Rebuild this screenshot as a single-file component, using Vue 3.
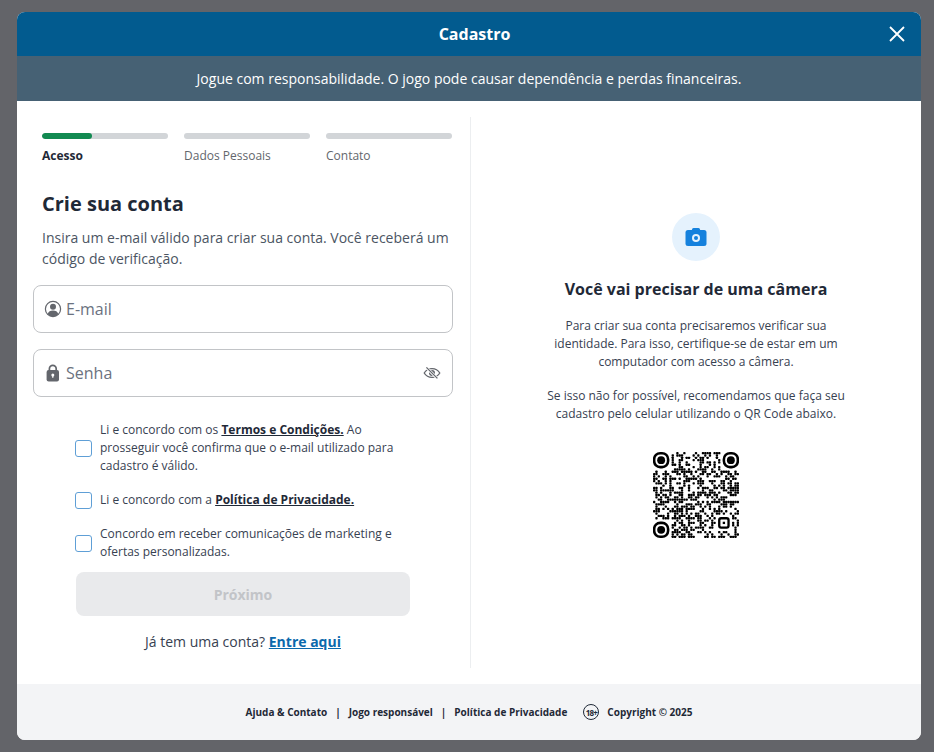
<template>
  <div class="overlay">
    <div class="modal">
      <header class="modal-header">
        <h1>Cadastro</h1>
        <button class="close-btn" aria-label="Fechar">
          <svg width="18" height="18" viewBox="0 0 18 18"><path d="M2 2l14 14M16 2L2 16" stroke="#fff" stroke-width="1.8" fill="none" /></svg>
        </button>
      </header>
      <div class="banner">Jogue com responsabilidade. O jogo pode causar dependência e perdas financeiras.</div>

      <main class="body">
        <section class="left">
          <div class="steps">
            <div v-for="(step, i) in steps" :key="step" class="step" :class="{ active: i === 0 }">
              <div class="bar"><div v-if="i === 0" class="bar-fill"></div></div>
              <span>{{ step }}</span>
            </div>
          </div>

          <h2>Crie sua conta</h2>
          <p class="intro">Insira um e-mail válido para criar sua conta. Você receberá um código de verificação.</p>

          <div class="fields">
            <label class="field">
              <svg class="field-icon" width="18" height="18" viewBox="0 0 18 18">
                <circle cx="9" cy="9" r="7.6" fill="none" stroke="#63666c" stroke-width="1.2" />
                <circle cx="9" cy="6.8" r="3" fill="#63666c" />
                <path d="M3.6 14.2c.8-2.6 2.8-3.7 5.4-3.7s4.6 1.1 5.4 3.7A7.4 7.4 0 0 1 9 16.5a7.4 7.4 0 0 1-5.4-2.3z" fill="#63666c" />
              </svg>
              <input type="text" placeholder="E-mail" />
            </label>
            <label class="field">
              <svg class="field-icon" width="18" height="18" viewBox="0 0 18 18">
                <path d="M5.4 7V4.8a3.4 3.4 0 0 1 6.8 0V7" fill="none" stroke="#63666c" stroke-width="1.7" />
                <rect x="2.6" y="6" width="12.4" height="11.4" rx="2" fill="#63666c" />
                <circle cx="8.8" cy="11" r="1.5" fill="#fff" />
                <rect x="8.2" y="11.4" width="1.2" height="2.4" fill="#fff" />
              </svg>
              <input type="password" placeholder="Senha" />
              <svg class="eye" width="18" height="18" viewBox="0 0 18 18">
                <path d="M1.2 9C3 6 5.8 4.6 9 4.6S15 6 16.8 9C15 12 12.2 13.4 9 13.4S3 12 1.2 9z" fill="none" stroke="#63666c" stroke-width="1.3" />
                <circle cx="9" cy="9" r="3" fill="#63666c" />
                <path d="M3.4 3.4l11 11" stroke="#fff" stroke-width="2.8" />
                <path d="M3.4 3.4l11 11" stroke="#63666c" stroke-width="1.3" />
              </svg>
            </label>
          </div>

          <div class="checks">
            <label class="check">
              <span class="box"></span>
              <span>Li e concordo com os <a>Termos e Condições.</a> Ao prosseguir você confirma que o e-mail utilizado para cadastro é válido.</span>
            </label>
            <label class="check">
              <span class="box"></span>
              <span>Li e concordo com a <a>Política de Privacidade.</a></span>
            </label>
            <label class="check">
              <span class="box"></span>
              <span>Concordo em receber comunicações de marketing e ofertas personalizadas.</span>
            </label>
          </div>

          <button class="next" disabled>Próximo</button>
          <p class="login">Já tem uma conta? <a>Entre aqui</a></p>
        </section>

        <section class="right">
          <div class="camera">
            <svg width="22" height="20" viewBox="0 0 22 20">
              <rect x="7" y="1" width="8" height="3" rx="1.5" fill="#1581dd" />
              <rect x="0.5" y="3" width="21" height="16" rx="2.5" fill="#1581dd" />
              <circle cx="11" cy="11" r="4" fill="#e5f2fd" />
              <circle cx="11" cy="11" r="2" fill="#1581dd" />
            </svg>
          </div>
          <h3>Você vai precisar de uma câmera</h3>
          <p>Para criar sua conta precisaremos verificar sua identidade. Para isso, certifique-se de estar em um computador com acesso a câmera.</p>
          <p>Se isso não for possível, recomendamos que faça seu cadastro pelo celular utilizando o QR Code abaixo.</p>
          <svg class="qr" width="86" height="88" viewBox="0 0 37 37">
            <rect v-for="m in modules" :key="m.x + '-' + m.y" :x="m.x" :y="m.y" width="1" height="1" rx="0.3" fill="#000" />
            <g v-for="f in finders" :key="f.x + '-' + f.y">
              <rect :x="f.x + 0.5" :y="f.y + 0.5" width="6" height="6" rx="2.6" fill="none" stroke="#000" stroke-width="1.1" />
              <circle :cx="f.x + 3.5" :cy="f.y + 3.5" r="1.7" fill="#000" />
            </g>
            <rect x="28.5" y="28.5" width="4" height="4" rx="0.8" fill="none" stroke="#000" />
            <rect x="30" y="30" width="1" height="1" fill="#000" />
          </svg>
        </section>
      </main>

      <footer class="modal-footer">
        <a>Ajuda &amp; Contato</a>
        <i>|</i>
        <a>Jogo responsável</a>
        <i>|</i>
        <a>Política de Privacidade</a>
        <span class="age">18+</span>
        <a>Copyright © 2025</a>
      </footer>
    </div>
  </div>
</template>

<script setup>
const steps = ['Acesso', 'Dados Pessoais', 'Contato']

const finders = [
  { x: 0, y: 0 },
  { x: 30, y: 0 },
  { x: 0, y: 30 }
]

// not a readable code, only the look of one
function buildModules() {
  const out = []
  let seed = 20250
  for (let y = 0; y < 37; y++) {
    for (let x = 0; x < 37; x++) {
      seed = (seed * 1103515245 + 12345) & 0x7fffffff
      const inFinder = (x < 8 && y < 8) || (x > 28 && y < 8) || (x < 8 && y > 28)
      const inAlign = x >= 27 && x <= 33 && y >= 27 && y <= 33
      if (!inFinder && !inAlign && (seed >> 16) % 100 < 46) out.push({ x, y })
    }
  }
  return out
}

const modules = buildModules()
</script>

<style>
html, body {
  margin: 0;
  background: #636469;
}
</style>

<style scoped>
.overlay {
  box-sizing: border-box;
  width: 934px;
  height: 752px;
  padding: 12px 13px 12px 17px;
  background: #636469;
  font-family: "Open Sans", sans-serif;
  color: #1f2937;
}

.modal {
  display: flex;
  flex-direction: column;
  height: 728px;
  background: #fff;
  border-radius: 8px;
  overflow: hidden;
}

.modal-header {
  position: relative;
  height: 44px;
  flex-shrink: 0;
  display: flex;
  align-items: center;
  justify-content: center;
  padding-left: 11px;
  background: #025b8f;
}

.modal-header h1 {
  margin: 0;
  font-size: 16px;
  font-weight: 700;
  color: #fff;
}

.close-btn {
  position: absolute;
  top: 13px;
  right: 15px;
  padding: 0;
  width: 18px;
  height: 18px;
  background: none;
  border: none;
  line-height: 0;
}

.banner {
  height: 45px;
  flex-shrink: 0;
  display: flex;
  align-items: center;
  justify-content: center;
  background: #466174;
  color: #fff;
  font-size: 14px;
}

.body {
  flex: 1;
  display: flex;
  padding: 16px 0;
  min-height: 0;
}

.left {
  box-sizing: border-box;
  width: 454px;
  padding: 0 18px 0 16px;
  border-right: 1px solid #eceef0;
}

.steps {
  display: flex;
  gap: 16px;
  padding: 16px 0 0 9px;
}

.step {
  width: 126px;
  font-size: 12px;
  line-height: 16px;
  color: #63666c;
}

.step.active {
  font-weight: 700;
  color: #1f2937;
}

.bar {
  height: 6px;
  margin-bottom: 9px;
  background: #d2d5d8;
  border-radius: 3px;
  overflow: hidden;
}

.bar-fill {
  width: 50px;
  height: 100%;
  background: #128a51;
  border-radius: 3px;
}

h2 {
  margin: 26px 0 0 9px;
  font-size: 20px;
  line-height: 28px;
  font-weight: 700;
  color: #1f2937;
}

.intro {
  margin: 9px 0 0 9px;
  font-size: 14px;
  line-height: 21px;
  color: #4b5563;
}

.fields {
  display: flex;
  flex-direction: column;
  gap: 16px;
  margin-top: 16px;
}

.field {
  box-sizing: border-box;
  display: flex;
  align-items: center;
  gap: 4px;
  height: 48px;
  width: 420px;
  padding: 0 11px 0 10px;
  border: 1px solid #c2c4c7;
  border-radius: 8px;
}

.field-icon {
  flex-shrink: 0;
}

.field input {
  flex: 1;
  min-width: 0;
  padding: 0;
  border: none;
  outline: none;
  background: none;
  font: 16px "Open Sans", sans-serif;
  color: #1f2937;
}

.field input::placeholder {
  color: #6b7280;
  opacity: 1;
}

.eye {
  flex-shrink: 0;
}

.checks {
  display: flex;
  flex-direction: column;
  gap: 16px;
  margin: 24px 0 0 42px;
  width: 320px;
}

.check {
  display: flex;
  align-items: center;
  gap: 8px;
  font-size: 12px;
  line-height: 18px;
  color: #374151;
}

.check a {
  font-weight: 700;
  color: #1f2937;
  text-decoration: underline;
}

.box {
  box-sizing: border-box;
  flex-shrink: 0;
  width: 17px;
  height: 17px;
  border: 1.5px solid #5f9fd6;
  border-radius: 3px;
}

.next {
  display: block;
  width: 334px;
  height: 44px;
  margin: 11px 0 0 43px;
  border: none;
  border-radius: 8px;
  background: #e9eaec;
  color: #c2c4c8;
  font: 700 14px "Open Sans", sans-serif;
}

.login {
  width: 334px;
  margin: 16px 0 0 43px;
  text-align: center;
  font-size: 14px;
  line-height: 20px;
  color: #374151;
}

.login a {
  font-weight: 700;
  color: #0b69ac;
  text-decoration: underline;
}

.right {
  flex: 1;
  display: flex;
  flex-direction: column;
  align-items: center;
  padding-top: 96px;
  text-align: center;
}

.camera {
  display: flex;
  align-items: center;
  justify-content: center;
  width: 48px;
  height: 48px;
  border-radius: 50%;
  background: #e5f2fd;
}

h3 {
  margin: 16px 0 0;
  font-size: 16px;
  line-height: 24px;
  font-weight: 700;
  color: #1f2937;
}

.right p {
  width: 310px;
  margin: 16px 0 0;
  font-size: 12px;
  line-height: 18px;
  color: #374151;
}

.qr {
  margin-top: 28px;
}

.modal-footer {
  height: 56px;
  flex-shrink: 0;
  display: flex;
  align-items: center;
  justify-content: center;
  gap: 8px;
  background: #f3f4f6;
  font-size: 10px;
  font-weight: 700;
  color: #1f2937;
}

.modal-footer i {
  font-style: normal;
}

.age {
  box-sizing: border-box;
  display: flex;
  align-items: center;
  justify-content: center;
  width: 16px;
  height: 16px;
  margin: 0 0 0 8px;
  border: 1.5px solid #1f2937;
  border-radius: 50%;
  font-size: 8px;
  letter-spacing: -0.8px;
}
</style>
